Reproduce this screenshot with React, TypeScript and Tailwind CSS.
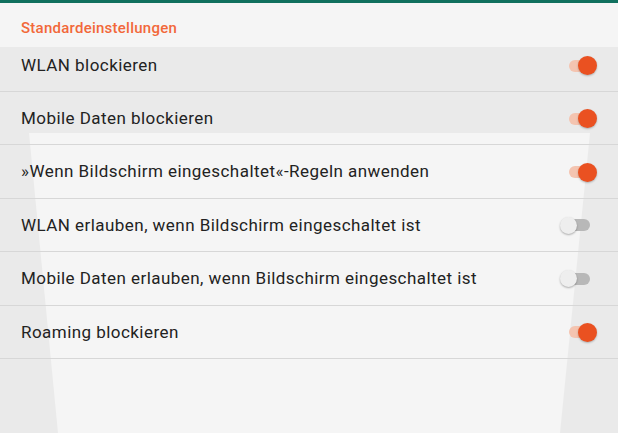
const rows = [
  { label: "WLAN blockieren", on: true },
  { label: "Mobile Daten blockieren", on: true },
  { label: "»Wenn Bildschirm eingeschaltet«-Regeln anwenden", on: true },
  { label: "WLAN erlauben, wenn Bildschirm eingeschaltet ist", on: false },
  { label: "Mobile Daten erlauben, wenn Bildschirm eingeschaltet ist", on: false },
  { label: "Roaming blockieren", on: true },
];

const Toggle = ({ on }: { on: boolean }) =>
  on ? (
    <div className="flex h-[20px] w-[37px] shrink-0 items-center justify-end">
      <div className="h-[12px] w-[26px] rounded-full bg-[#f4c4b0]" />
      <div className="-ml-[17px] h-[19px] w-[19px] rounded-full bg-[#ea5121] shadow-[0_1px_2px_rgba(0,0,0,0.25)]" />
    </div>
  ) : (
    <div className="flex h-[20px] w-[37px] shrink-0 items-center">
      <div className="relative h-[17px] w-[17px] rounded-full bg-[#eeeeee] shadow-[0_1px_2px_rgba(0,0,0,0.3)]" />
      <div className="-ml-[10px] h-[12px] w-[23px] rounded-full bg-[#b8b8b8]" />
    </div>
  );

export default function App() {
  return (
    <div className="relative h-[433px] w-full overflow-hidden bg-[#eaeaea] font-['Roboto',sans-serif] text-[#222222]">
      {/* light backdrop shape */}
      <div className="absolute inset-x-0 bottom-0 top-[133px] bg-[#f5f5f5] [clip-path:polygon(29px_0,590px_0,560px_100%,58px_100%)]" />

      <div className="relative">
        {/* Header */}
        <div className="h-[47px] border-t-[3px] border-[#10705e] bg-[#f5f5f5] px-[21px] pt-[14px] text-[15px] font-medium tracking-[0.25px] text-[#f2683a]">
          Standardeinstellungen
        </div>

        {rows.map((row, i) => (
          <div
            key={row.label}
            className={`flex items-center justify-between border-b border-[#d7d7d7] pl-[21px] pr-[21px] ${
              i === 0 ? "h-[45px] pb-[7px]" : "h-[53.4px] pt-[1px]"
            }`}
          >
            <span className="text-[17px] tracking-[0.45px]">{row.label}</span>
            <Toggle on={row.on} />
          </div>
        ))}
      </div>
    </div>
  );
}
